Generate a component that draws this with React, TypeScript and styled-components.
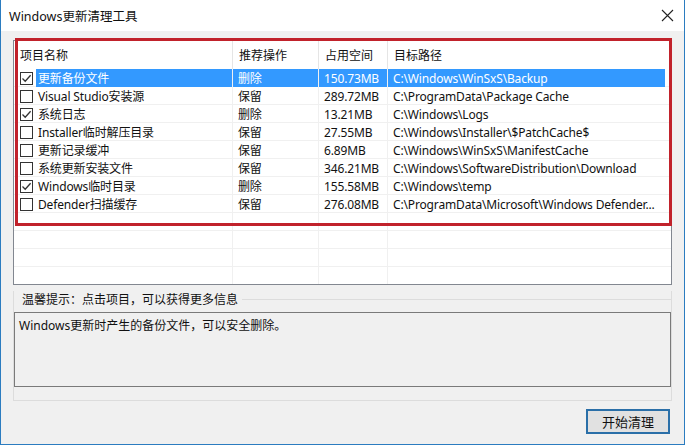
import React from "react";
import styled, { createGlobalStyle } from "styled-components";

const FONT = `"Noto Sans", "Noto Sans CJK SC", sans-serif`;

const GlobalStyle = createGlobalStyle`
  html, body {
    margin: 0;
    padding: 0;
    background: #ffffff;
  }
  body {
    font-family: ${FONT};
  }
`;

type Item = {
  name: string;
  action: string;
  size: string;
  path: string;
  checked: boolean;
};

const ITEMS: Item[] = [
  { name: "更新备份文件", action: "删除", size: "150.73MB", path: "C:\\Windows\\WinSxS\\Backup", checked: true },
  { name: "Visual Studio安装源", action: "保留", size: "289.72MB", path: "C:\\ProgramData\\Package Cache", checked: false },
  { name: "系统日志", action: "删除", size: "13.21MB", path: "C:\\Windows\\Logs", checked: true },
  { name: "Installer临时解压目录", action: "保留", size: "27.55MB", path: "C:\\Windows\\Installer\\$PatchCache$", checked: false },
  { name: "更新记录缓冲", action: "保留", size: "6.89MB", path: "C:\\Windows\\WinSxS\\ManifestCache", checked: false },
  { name: "系统更新安装文件", action: "保留", size: "346.21MB", path: "C:\\Windows\\SoftwareDistribution\\Download", checked: false },
  { name: "Windows临时目录", action: "删除", size: "155.58MB", path: "C:\\Windows\\temp", checked: true },
  { name: "Defender扫描缓存", action: "保留", size: "276.08MB", path: "C:\\ProgramData\\Microsoft\\Windows Defender...", checked: false },
];

const EMPTY_ROWS = 4;
const COLS = "219px 86px 69px 1fr";

/* ------------------------ WINDOW ---------------------- */

const Window = styled.div`
  position: relative;
  width: 685px;
  height: 445px;
  box-sizing: border-box;
  border: 1px solid #2b7cc0;
  border-top: none;
  background: #f0f0f0;
  display: flex;
  flex-direction: column;
  overflow: hidden;
`;

const TitleBar = styled.div`
  height: 31px;
  flex-shrink: 0;
  background: #ffffff;
  display: flex;
  align-items: center;
  justify-content: space-between;
  padding: 0 8px 0 8px;
  font-size: 12.5px;
  color: #111;
`;

const CloseButton = styled.div`
  width: 14px;
  height: 14px;
  margin-right: 2px;
  display: flex;
  align-items: center;
  justify-content: center;
`;

const Body = styled.div`
  flex: 1;
  display: flex;
  flex-direction: column;
  padding: 9px 12px 0 12px;
`;

/* ------------------------ LIST ---------------------- */

const ListBox = styled.div`
  height: 245px;
  box-sizing: border-box;
  border: 1px solid #828790;
  background: #ffffff;
  display: flex;
  flex-direction: column;
  overflow: hidden;
`;

const HeaderRow = styled.div`
  display: grid;
  grid-template-columns: ${COLS};
  height: 28px;
  flex-shrink: 0;
  align-items: center;
  font-size: 12px;
  color: #111;
`;

const HeaderCell = styled.div`
  height: 100%;
  display: flex;
  align-items: center;
  padding-left: 6px;
  border-right: 1px solid #e5e5e5;
  &:last-child {
    border-right: none;
  }
`;

const Row = styled.div<{ $selected?: boolean }>`
  display: grid;
  grid-template-columns: ${COLS};
  height: 18px;
  flex-shrink: 0;
  font-size: 12px;
  letter-spacing: -0.15px;
  color: ${(p) => (p.$selected ? "#ffffff" : "#111")};
  border-bottom: 1px solid #f0f0f0;
  box-sizing: border-box;
`;

const Cell = styled.div<{ $selected?: boolean }>`
  display: flex;
  align-items: center;
  padding-left: 5px;
  white-space: nowrap;
  overflow: hidden;
  border-right: 1px solid #f0f0f0;
  background: ${(p) => (p.$selected ? "#3399ff" : "transparent")};
  &:last-child {
    border-right: none;
    margin-right: 6px;
  }
`;

const NameCell = styled.div`
  display: flex;
  align-items: center;
  padding-left: 6px;
  gap: 3px;
  white-space: nowrap;
  border-right: 1px solid #f0f0f0;
`;

const NameText = styled.span<{ $selected?: boolean }>`
  flex: 1;
  height: 100%;
  display: flex;
  align-items: center;
  padding-left: 2px;
  background: ${(p) => (p.$selected ? "#3399ff" : "transparent")};
`;

const CheckBox = styled.span`
  width: 13px;
  height: 13px;
  flex-shrink: 0;
  box-sizing: border-box;
  border: 1px solid #333;
  background: #fff;
  display: flex;
  align-items: center;
  justify-content: center;
`;

const Highlight = styled.div`
  position: absolute;
  left: 14px;
  top: 38px;
  width: 657px;
  height: 188px;
  box-sizing: border-box;
  border: 3px solid #c1222b;
  pointer-events: none;
`;

/* ------------------------ TIP GROUP ---------------------- */

const Group = styled.div`
  margin-top: 6px;
  position: relative;
  height: 110px;
  box-sizing: border-box;
  border: 1px solid #dcdcdc;
  border-top: none;
  display: flex;
  flex-direction: column;
`;

const GroupLegend = styled.div`
  display: flex;
  align-items: center;
  gap: 4px;
  height: 15px;
  font-size: 12px;
  color: #111;
  padding-left: 8px;
  &::after {
    content: "";
    flex: 1;
    height: 1px;
    background: #dcdcdc;
    margin-top: 2px;
  }
`;

const TipBox = styled.div`
  margin-top: 6px;
  height: 75px;
  box-sizing: border-box;
  border: 1px solid #7a7a7a;
  background: #f0f0f0;
  padding: 3px 4px;
  font-size: 12px;
  color: #111;
`;

/* ------------------------ FOOTER ---------------------- */

const Footer = styled.div`
  display: flex;
  justify-content: flex-end;
  padding: 8px 2px 0 0;
`;

const PrimaryButton = styled.button`
  width: 84px;
  height: 25px;
  box-sizing: border-box;
  border: 2px solid #2a6fa8;
  background: #e1e1e1;
  font-family: ${FONT};
  font-size: 13px;
  color: #111;
  padding: 0;
  display: flex;
  align-items: center;
  justify-content: center;
`;

function Check() {
  return (
    <svg width="11" height="11" viewBox="0 0 11 11">
      <path d="M1.5 5.5 L4.2 8.2 L9.6 2.2" fill="none" stroke="#333" strokeWidth="1.3" />
    </svg>
  );
}

export default function App() {
  return (
    <>
      <GlobalStyle />
      <Window>
        <TitleBar>
          <span>Windows更新清理工具</span>
          <CloseButton>
            <svg width="13" height="13" viewBox="0 0 13 13">
              <path d="M1 1 L12 12 M12 1 L1 12" stroke="#222" strokeWidth="1.1" />
            </svg>
          </CloseButton>
        </TitleBar>
        <Body>
          <ListBox>
            <HeaderRow>
              <HeaderCell>项目名称</HeaderCell>
              <HeaderCell>推荐操作</HeaderCell>
              <HeaderCell>占用空间</HeaderCell>
              <HeaderCell>目标路径</HeaderCell>
            </HeaderRow>
            {ITEMS.map((it, i) => {
              const sel = i === 0;
              return (
                <Row key={it.name} $selected={sel}>
                  <NameCell>
                    <CheckBox>{it.checked && <Check />}</CheckBox>
                    <NameText $selected={sel}>{it.name}</NameText>
                  </NameCell>
                  <Cell $selected={sel}>{it.action}</Cell>
                  <Cell $selected={sel}>{it.size}</Cell>
                  <Cell $selected={sel}>{it.path}</Cell>
                </Row>
              );
            })}
            {Array.from({ length: EMPTY_ROWS }).map((_, i) => (
              <Row key={"e" + i}>
                <NameCell />
                <Cell />
                <Cell />
                <Cell />
              </Row>
            ))}
          </ListBox>
          <Group>
            <GroupLegend>温馨提示：点击项目，可以获得更多信息</GroupLegend>
            <TipBox>Windows更新时产生的备份文件，可以安全删除。</TipBox>
          </Group>
          <Footer>
            <PrimaryButton>开始清理</PrimaryButton>
          </Footer>
        </Body>
        <Highlight />
      </Window>
    </>
  );
}
